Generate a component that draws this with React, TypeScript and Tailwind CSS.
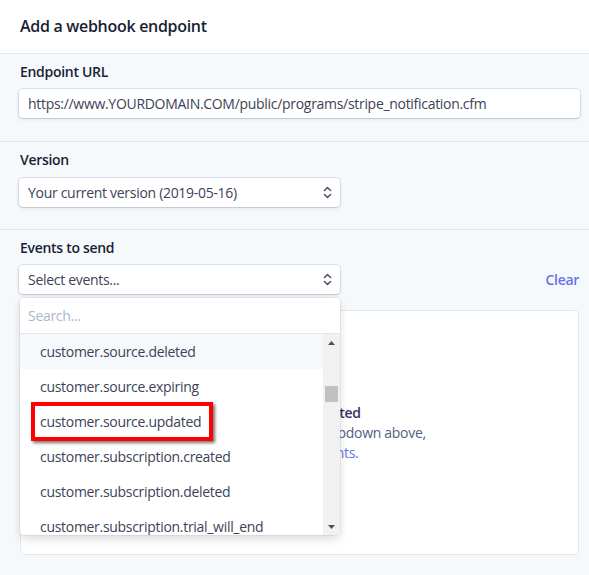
import React from "react";

const inputShadow =
  "shadow-[0_0_0_1px_rgba(50,50,93,0.12),0_2px_5px_0_rgba(50,50,93,0.08),0_1px_1.5px_0_rgba(0,0,0,0.08)]";

function Chevrons() {
  return (
    <svg width="9" height="13" viewBox="0 0 9 13" fill="none" stroke="#4f566b" strokeWidth="1.6" strokeLinecap="round" strokeLinejoin="round">
      <path d="M1.5 4.5 L4.5 1.5 L7.5 4.5" />
      <path d="M1.5 8.5 L4.5 11.5 L7.5 8.5" />
    </svg>
  );
}

const items = [
  "customer.source.deleted",
  "customer.source.expiring",
  "customer.source.updated",
  "customer.subscription.created",
  "customer.subscription.deleted",
  "customer.subscription.trial_will_end",
];

export default function App() {
  return (
    <div
      className="w-[589px] h-[575px] overflow-hidden bg-[#f6f9fc] text-[#32325d] tracking-[-0.3px]"
      style={{ fontFamily: '"Open Sans", "Noto Sans", sans-serif' }}
    >
      <div className="h-[54px] bg-white border-b border-[#e3e8ee] px-5 flex items-center">
        <h1 className="text-[16px] font-semibold text-[#1a1f36] tracking-[-0.3px] -mt-[1px]">Add a webhook endpoint</h1>
      </div>

      <div className="px-[19px] pt-[8px] pb-[23px] border-b border-[#e3e8ee]">
        <div className="text-[14px] leading-[20px] font-semibold text-[#1a1f36] pl-px">Endpoint URL</div>
        <div className={`mt-[7px] h-[29px] bg-white rounded-[4px] ${inputShadow} flex items-center px-[9px] text-[14px] text-[#3c4257] w-[561px]`}>
          https://www.YOURDOMAIN.COM/public/programs/stripe_notification.cfm
        </div>
      </div>

      <div className="px-[19px] pt-[8px] pb-[22px] border-b border-[#e3e8ee]">
        <div className="text-[14px] leading-[20px] font-semibold text-[#1a1f36] pl-px">Version</div>
        <div className={`mt-[8px] h-[29px] w-[321px] bg-white rounded-[4px] ${inputShadow} flex items-center justify-between pl-[9px] pr-[8px] text-[14px] text-[#3c4257]`}>
          <span>Your current version (2019-05-16)</span>
          <Chevrons />
        </div>
      </div>

      <div className="relative px-[19px] pt-[8px]">
        <div className="text-[14px] leading-[20px] font-semibold text-[#1a1f36] pl-px">Events to send</div>
        <div className="mt-[7px] w-[561px] flex items-center justify-between">
          <div className={`h-[29px] w-[321px] bg-white rounded-[4px] ${inputShadow} flex items-center justify-between pl-[9px] pr-[8px] text-[14px] text-[#3c4257]`}>
            <span>Select events...</span>
            <Chevrons />
          </div>
          <span className="text-[14px] font-semibold text-[#6772e5] mr-[1px]">Clear</span>
        </div>

        <div className="mt-[16px] ml-px h-[245px] w-[559px] bg-white rounded-[4px] border border-[#e3e8ee] flex flex-col items-center justify-center text-center text-[14px] leading-[20px]">
          <div className="font-semibold text-[#32325d]">No events selected</div>
          <div className="text-[#525f7f]">Select events from the dropdown above,</div>
          <div className="text-[#525f7f]">
            or <span className="text-[#6772e5]">select all events.</span>
          </div>
        </div>

        <div className="absolute left-[20px] top-[68px] w-[320px] h-[237px] bg-white rounded-[4px] shadow-[0_0_0_1px_rgba(50,50,93,0.06),0_4px_10px_0_rgba(0,0,0,0.14)] flex flex-col overflow-hidden">
          <div className="h-[36px] flex items-center px-[8px] border-b border-[#e3e8ee] text-[14px] text-[#aab7c4] shrink-0">
            Search...
          </div>
          <div className="flex flex-1 min-h-0">
            <div className="relative flex-1 overflow-hidden">
              {items.map((it, i) => (
                <div
                  key={it}
                  className={`h-[35px] flex items-center pl-[20px] text-[14px] text-[#3c4257] ${i === 0 ? "bg-[#f6f9fc]" : ""}`}
                >
                  {it}
                </div>
              ))}
              <div className="absolute left-[11px] top-[68px] w-[182px] h-[39px] border-[4px] border-[#ff0000] shadow-[2px_2px_3px_rgba(0,0,0,0.55)]" />
            </div>
            <div className="w-[17px] bg-[#f1f1f1] flex flex-col items-center shrink-0">
              <div className="h-[17px] flex items-center justify-center">
                <svg width="7" height="4" viewBox="0 0 7 4"><path d="M0 4 L3.5 0 L7 4 Z" fill="#505050" /></svg>
              </div>
              <div className="mt-[35px] w-[13px] h-[16px] bg-[#c1c1c1]" />
              <div className="flex-1" />
              <div className="h-[17px] flex items-center justify-center">
                <svg width="7" height="4" viewBox="0 0 7 4"><path d="M0 0 L7 0 L3.5 4 Z" fill="#505050" /></svg>
              </div>
            </div>
          </div>
        </div>
      </div>
    </div>
  );
}
